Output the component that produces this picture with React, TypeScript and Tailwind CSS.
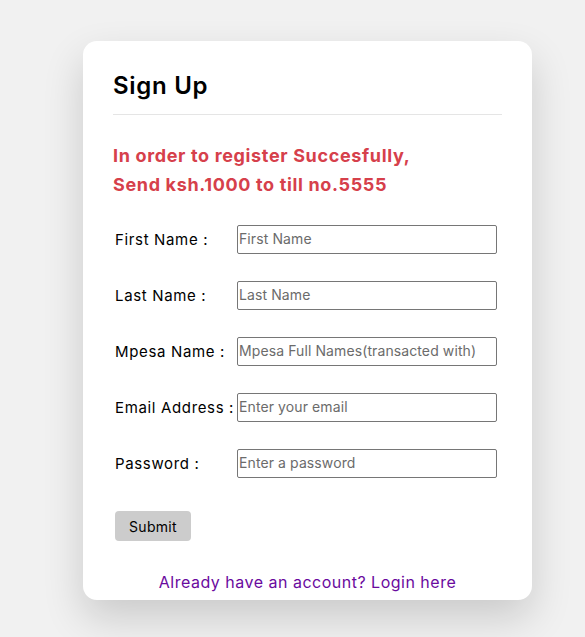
const FIELDS = [
  { label: 'First Name :', placeholder: 'First Name', type: 'text' },
  { label: 'Last Name :', placeholder: 'Last Name', type: 'text' },
  { label: 'Mpesa Name :', placeholder: 'Mpesa Full Names(transacted with)', type: 'text' },
  { label: 'Email Address :', placeholder: 'Enter your email', type: 'email' },
  { label: 'Password :', placeholder: 'Enter a password', type: 'password' },
]

export default function App() {
  return (
    <div
      className="min-h-screen bg-[#f1f1f1] pl-[83px] pt-[41px] text-black"
      style={{ fontFamily: 'Inter, sans-serif' }}
    >
      <div className="flex h-[559px] w-[449px] flex-col rounded-[14px] bg-white px-[30px] pt-[30px] shadow-[0_18px_40px_rgba(0,0,0,0.16)]">
        <h1 className="text-[24px] font-semibold leading-[29px] tracking-[0.7px]">Sign Up</h1>
        <hr className="mt-[14px] border-t border-[#e5e5e5]" />
        <p className="mt-[26px] text-[18px] font-bold leading-[29px] tracking-[0.65px] text-[#d6404b]">
          In order to register Succesfully,
          <br />
          Send ksh.1000 to till no.5555
        </p>
        <form className="mt-[26px] flex flex-col gap-[27px]">
          {FIELDS.map((f) => (
            <div key={f.label} className="flex items-center">
              <label className="w-[124px] pl-[2px] pt-[2px] text-[15px] tracking-[0.65px]">{f.label}</label>
              <input
                type={f.type}
                placeholder={f.placeholder}
                className="h-[29px] w-[260px] rounded-[2px] border border-[#767676] px-[1px] pb-[2px] text-[14px] tracking-[0.1px] placeholder:text-[#6b6b6b]"
              />
            </div>
          ))}
        </form>
        <div className="mt-[33px] pl-[2px]">
          <button className="h-[30px] w-[76px] rounded-[4px] bg-[#cccccc] text-[14px] tracking-[0.3px]">Submit</button>
        </div>
        <a href="#" className="mt-[29px] text-center text-[16px] tracking-[0.5px] text-[#6a0a9e]">
          Already have an account? Login here
        </a>
      </div>
    </div>
  )
}
